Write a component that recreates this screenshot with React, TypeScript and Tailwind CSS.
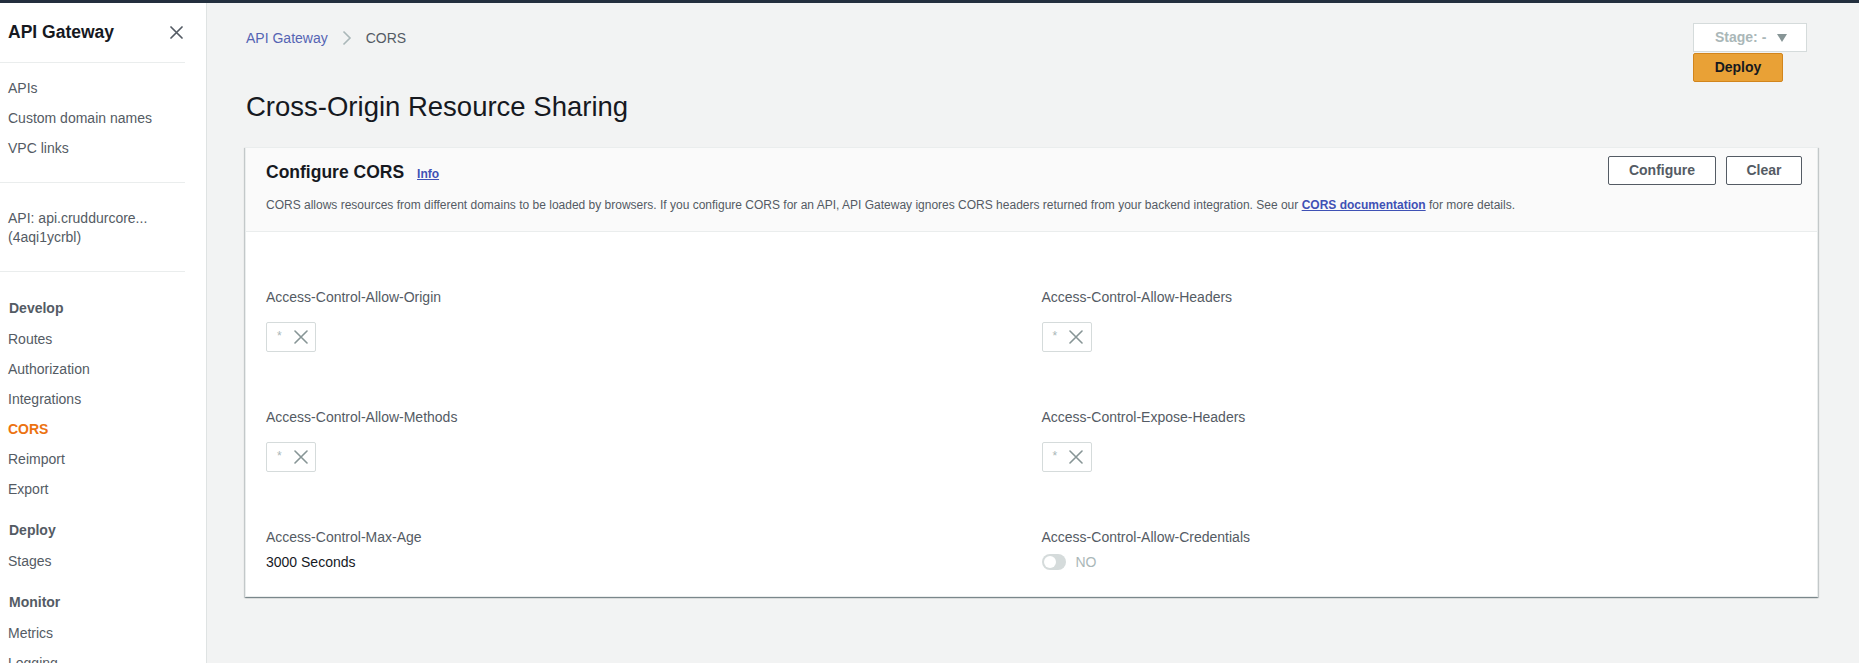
const font = { fontFamily: '"Liberation Sans", Arial, sans-serif' };

const groups = [
  { title: 'Develop', items: ['Routes', 'Authorization', 'Integrations', 'CORS', 'Reimport', 'Export'] },
  { title: 'Deploy', items: ['Stages'] },
  { title: 'Monitor', items: ['Metrics', 'Logging'] },
];

function Cross({ size, width, color }: { size: number; width: number; color: string }) {
  return (
    <svg width={size} height={size} viewBox={`0 0 ${size} ${size}`}>
      <path d={`M1 1 L${size - 1} ${size - 1} M${size - 1} 1 L1 ${size - 1}`} stroke={color} strokeWidth={width} strokeLinecap="round" />
    </svg>
  );
}

function Divider() {
  return <div className="w-[185px] h-px bg-[#eaeded]" />;
}

function Sidebar() {
  return (
    <aside className="w-[207px] shrink-0 bg-white border-r border-[#dfe3e3] overflow-hidden text-[14px] text-[#545b64]">
      <div className="h-[59px] flex items-center justify-between pl-[8px] pr-[23px]">
        <span className="text-[17.5px] font-bold text-[#16191f]">API Gateway</span>
        <Cross size={13} width={1.7} color="#545b64" />
      </div>
      <Divider />
      <ul className="pt-[10px] pb-[19px] pl-[8px]">
        <li className="leading-[30px]">APIs</li>
        <li className="leading-[30px]">Custom domain names</li>
        <li className="leading-[30px]">VPC links</li>
      </ul>
      <Divider />
      <div className="pt-[26px] pb-[24px] pl-[8px] leading-[19px]">
        <div>API: api.cruddurcore...</div>
        <div>(4aqi1ycrbl)</div>
      </div>
      <Divider />
      <div className="pt-[21px]">
        {groups.map((g, gi) => (
          <div key={g.title} className={gi > 0 ? 'mt-[11px]' : ''}>
            <div className="h-[31px] flex items-center pl-[9px] font-bold">{g.title}</div>
            {g.items.map((item) => (
              <div
                key={item}
                className={`h-[30px] flex items-center pl-[8px] ${
                  item === 'CORS' ? 'text-[#ec7211] font-bold' : ''
                }`}
              >
                {item}
              </div>
            ))}
          </div>
        ))}
      </div>
    </aside>
  );
}

function Chip() {
  return (
    <div className="mt-[14px] w-[50px] h-[30px] bg-white border border-[#d5dbdb] rounded-[2px] flex items-center pl-[10px] gap-[12px]">
      <span className="text-[12px] text-[#aab7b8] leading-none mt-[-3px]">*</span>
      <Cross size={14} width={1.6} color="#879596" />
    </div>
  );
}

function Label({ children }: { children: string }) {
  return <div className="leading-[22px] text-[14px] text-[#545b64]">{children}</div>;
}

export default function App() {
  return (
    <div className="h-screen flex flex-col bg-[#f2f3f3] overflow-hidden" style={font}>
      <div className="h-[3px] bg-[#232f3e] shrink-0" />
      <div className="flex flex-1 min-h-0">
        <Sidebar />
        <main className="flex-1 pl-[38px] pr-[41px] pt-[20px]">
          <div className="flex justify-between items-start">
            <nav className="pt-[5px] pl-px flex items-center gap-[14px] text-[14px] leading-[20px]">
              <span className="text-[#5564b3]">API Gateway</span>
              <svg width="10" height="16" viewBox="0 0 10 16">
                <path d="M1.5 1.5 L8 8 L1.5 14.5" fill="none" stroke="#aab7b8" strokeWidth="1.6" />
              </svg>
              <span className="text-[#545b64]">CORS</span>
            </nav>
            <div className="mr-[11px] flex flex-col items-start">
              <div className="w-[114px] h-[29px] bg-white border border-[#d5dbdb] flex items-center pl-[21px] gap-[11px]">
                <span className="text-[14px] font-bold text-[#aab7b8]">Stage: -</span>
                <svg width="10" height="8" viewBox="0 0 10 8">
                  <path d="M0 0 L10 0 L5 8 Z" fill="#879596" />
                </svg>
              </div>
              <button className="mt-px w-[90px] h-[29px] bg-[#e9a136] border border-[#d2851c] rounded-[2px] text-[14px] font-bold text-[#16191f]">
                Deploy
              </button>
            </div>
          </div>

          <h1 className="mt-[7px] pl-px text-[27.5px] leading-[36px] text-[#16191f]">Cross-Origin Resource Sharing</h1>

          <section className="mt-[22px] bg-white border border-[#eaeded] shadow-[0_1px_1px_0_rgba(0,28,36,0.3),1px_1px_1px_0_rgba(0,28,36,0.15),-1px_1px_1px_0_rgba(0,28,36,0.15)]">
            <div className="bg-[#fafafa] border-b border-[#eaeded] flex justify-between pl-[20px] pr-[15px]">
              <div className="pt-[12px] pb-[17px]">
                <div className="flex items-baseline gap-[13px] leading-[24px]">
                  <h2 className="text-[17.5px] font-bold text-[#16191f]">Configure CORS</h2>
                  <a className="text-[12px] font-bold text-[#3f51b5] underline">Info</a>
                </div>
                <p className="mt-[10px] text-[12px] leading-[18px] text-[#545b64]">
                  CORS allows resources from different domains to be loaded by browsers. If you configure CORS for an API, API Gateway ignores CORS headers returned from your backend integration. See our{' '}
                  <a className="font-bold text-[#3f51b5] underline">CORS documentation</a> for more details.
                </p>
              </div>
              <div className="pt-[8px] flex gap-[10px]">
                <button className="w-[108px] h-[29px] bg-white border border-[#545b64] rounded-[2px] text-[14px] font-bold text-[#545b64]">
                  Configure
                </button>
                <button className="w-[76px] h-[29px] bg-white border border-[#545b64] rounded-[2px] text-[14px] font-bold text-[#545b64]">
                  Clear
                </button>
              </div>
            </div>

            <div className="grid grid-cols-2 gap-x-[20px] gap-y-[54px] pl-[20px] pr-[20px] pt-[54px] pb-[23px]">
              <div>
                <Label>Access-Control-Allow-Origin</Label>
                <Chip />
              </div>
              <div>
                <Label>Access-Control-Allow-Headers</Label>
                <Chip />
              </div>
              <div>
                <Label>Access-Control-Allow-Methods</Label>
                <Chip />
              </div>
              <div>
                <Label>Access-Control-Expose-Headers</Label>
                <Chip />
              </div>
              <div>
                <Label>Access-Control-Max-Age</Label>
                <div className="mt-[3px] leading-[22px] text-[14px] text-[#16191f]">3000 Seconds</div>
              </div>
              <div>
                <Label>Access-Control-Allow-Credentials</Label>
                <div className="mt-[6px] flex items-center gap-[10px]">
                  <div className="w-[24px] h-[16px] rounded-full bg-[#d5dbdb] p-[2px]">
                    <div className="w-[12px] h-[12px] rounded-full bg-white" />
                  </div>
                  <span className="text-[14px] leading-[16px] text-[#aab7b8]">NO</span>
                </div>
              </div>
            </div>
          </section>
        </main>
      </div>
    </div>
  );
}
